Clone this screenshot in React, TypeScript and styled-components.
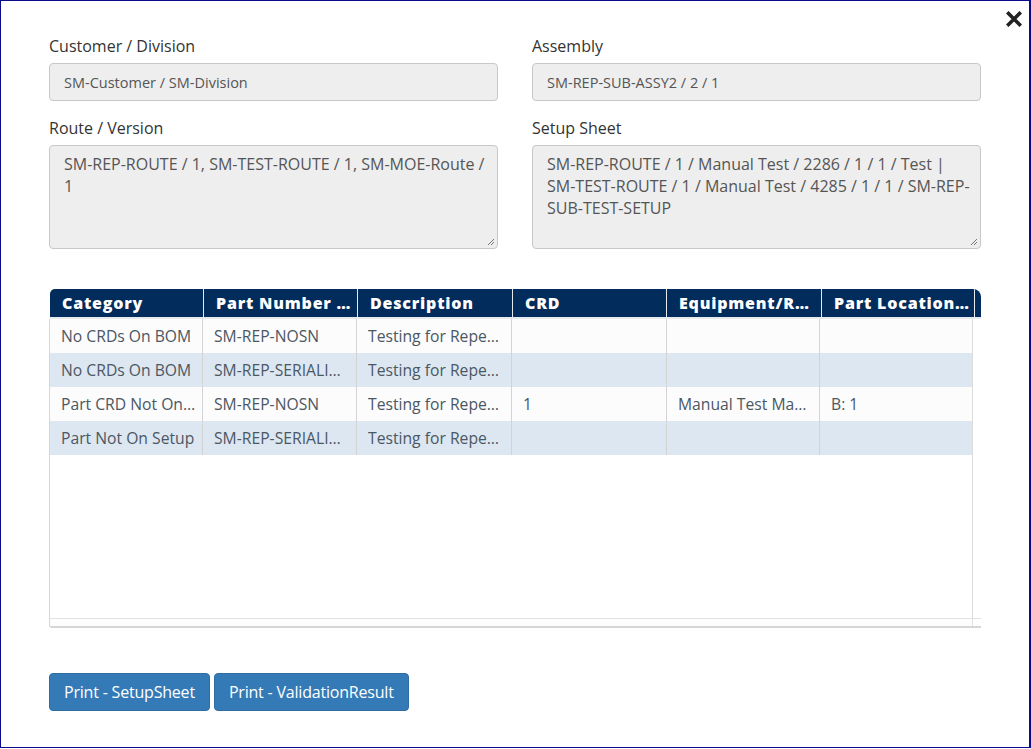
import React from "react";
import styled, { createGlobalStyle } from "styled-components";

const Global = createGlobalStyle`
  html, body { margin: 0; padding: 0; background: #fff; }
  body { font-family: "Open Sans", "Liberation Sans", sans-serif; }
  * { box-sizing: border-box; }
`;

const Frame = styled.div`
  position: relative;
  width: 1031px;
  height: 748px;
  border: 1px solid #0a0a8a;
  border-right-width: 2px;
  background: #fff;
  padding: 35px 49px 0 48px;
  display: flex;
  flex-direction: column;
`;

const Close = styled.button`
  position: absolute;
  top: 8px;
  right: 5px;
  width: 20px;
  height: 20px;
  border: none;
  background: none;
  padding: 0;
  cursor: pointer;
  display: flex;
  align-items: center;
  justify-content: center;
`;

const FormGrid = styled.div`
  display: grid;
  grid-template-columns: 449px 449px;
  column-gap: 34px;
  row-gap: 17px;
`;

const Field = styled.div`
  display: flex;
  flex-direction: column;
`;

const Label = styled.label`
  font-size: 16px;
  color: #333;
  line-height: 21px;
  margin-bottom: 6px;
`;

const Input = styled.div`
  height: 38px;
  background: #eeeeee;
  border: 1px solid #c8c8c8;
  border-radius: 4px;
  padding: 0 14px;
  font-size: 14.5px;
  color: #555;
  display: flex;
  align-items: center;
`;

const TextArea = styled.div`
  position: relative;
  height: 104px;
  background: #eeeeee;
  border: 1px solid #c8c8c8;
  border-radius: 4px;
  padding: 7px 10px 7px 14px;
  font-size: 16px;
  line-height: 22px;
  color: #555;
`;

const Grip = styled.svg`
  position: absolute;
  right: 2px;
  bottom: 2px;
`;

const GridWrap = styled.div`
  margin-top: 40px;
  width: 932px;
  display: flex;
  flex-direction: column;
`;

const Header = styled.div`
  display: grid;
  grid-template-columns: 154px 154px 155px 154px 155px 153px 7px;
  height: 30px;
  background: #022c5c;
  border-radius: 5px 8px 0 0;
  margin-left: 1px;
  width: 931px;
  overflow: hidden;
`;

const HeadCell = styled.div<{ $last?: boolean }>`
  color: #fff;
  font-weight: 800;
  font-size: 16px;
  letter-spacing: 0.8px;
  padding: 0 5px 0 12px;
  display: flex;
  align-items: center;
  white-space: nowrap;
  overflow: hidden;
  border-right: ${(p) => (p.$last ? "none" : "1px solid #e6e9ee")};
  border-bottom: 2px solid #e6e9ee;
`;

const HeadText = styled.span`
  overflow: hidden;
  text-overflow: ellipsis;
`;

const Body = styled.div`
  height: 309px;
  border-left: 1px solid #d6d6d6;
  border-bottom: 2px solid #d6d6d6;
  width: 932px;
  display: flex;
  flex-direction: column;
  border-bottom-left-radius: 3px;
`;

const Viewport = styled.div`
  flex: 1;
  display: flex;
`;

const Rows = styled.div`
  width: 923px;
  border-right: 1px solid #dcdcdc;
  display: flex;
  flex-direction: column;
`;

const VScroll = styled.div`
  flex: 1;
  background: #fff;
`;

const HScroll = styled.div`
  height: 8px;
  display: flex;
  border-top: 1px solid #e2e2e2;
`;

const HTrack = styled.div`
  width: 923px;
  border-right: 1px solid #e2e2e2;
  background: #fdfdfd;
`;

const Row = styled.div<{ $alt: boolean }>`
  display: grid;
  grid-template-columns: 153px 154px 155px 155px 153px 153px;
  height: 34px;
  background: ${(p) => (p.$alt ? "#dde7f1" : "#fcfcfc")};
`;

const Cell = styled.div<{ $last?: boolean; $padRight: number }>`
  font-size: 15.7px;
  color: #4b5763;
  padding: 0 ${(p) => p.$padRight}px 0 11px;
  display: flex;
  align-items: center;
  white-space: nowrap;
  overflow: hidden;
  border-right: ${(p) => (p.$last ? "none" : "1px solid #d3d3d3")};
`;

const CellText = styled.span`
  overflow: hidden;
  text-overflow: ellipsis;
`;

const Buttons = styled.div`
  margin-top: 45px;
  display: flex;
  gap: 4px;
`;

const Button = styled.button`
  height: 38px;
  padding: 0 14px;
  background: #337ab7;
  border: 1px solid #2e6da4;
  border-radius: 4px;
  color: #fff;
  font-family: "Open Sans", "Liberation Sans", sans-serif;
  font-size: 16px;
  letter-spacing: -0.2px;
  cursor: pointer;
`;

const headers = [
  "Category",
  "Part Number Description",
  "Description",
  "CRD",
  "Equipment/Resource",
  "Part Location Name",
];

const colPadRight = [5, 9, 8, 8, 8, 8];

const rows = [
  ["No CRDs On BOM", "SM-REP-NOSN", "Testing for Repeat Serial", "", "", ""],
  ["No CRDs On BOM", "SM-REP-SERIALIZED", "Testing for Repeat Serial", "", "", ""],
  ["Part CRD Not On Setup", "SM-REP-NOSN", "Testing for Repeat Serial", "1", "Manual Test Machine", "B: 1"],
  ["Part Not On Setup", "SM-REP-SERIALIZED", "Testing for Repeat Serial", "", "", ""],
];

export default function App() {
  return (
    <>
      <Global />
      <Frame>
        <Close aria-label="Close">
          <svg width="16" height="16" viewBox="0 0 16 16">
            <path d="M2.5 2.5 L13.5 13.5 M13.5 2.5 L2.5 13.5" stroke="#222" strokeWidth="3.6" strokeLinecap="square" />
          </svg>
        </Close>
        <FormGrid>
          <Field>
            <Label>Customer / Division</Label>
            <Input>SM-Customer / SM-Division</Input>
          </Field>
          <Field>
            <Label>Assembly</Label>
            <Input>SM-REP-SUB-ASSY2 / 2 / 1</Input>
          </Field>
          <Field>
            <Label>Route / Version</Label>
            <TextArea>
              SM-REP-ROUTE / 1, SM-TEST-ROUTE / 1, SM-MOE-Route / 1
              <Grip width="9" height="9" viewBox="0 0 9 9">
                <path d="M8 2 L2 8 M8 5 L5 8" stroke="#777" strokeWidth="1" />
              </Grip>
            </TextArea>
          </Field>
          <Field>
            <Label>Setup Sheet</Label>
            <TextArea>
              SM-REP-ROUTE / 1 / Manual Test / 2286 / 1 / 1 / Test | SM-TEST-ROUTE / 1 / Manual Test / 4285 / 1 / 1 / SM-REP-SUB-TEST-SETUP
              <Grip width="9" height="9" viewBox="0 0 9 9">
                <path d="M8 2 L2 8 M8 5 L5 8" stroke="#777" strokeWidth="1" />
              </Grip>
            </TextArea>
          </Field>
        </FormGrid>

        <GridWrap>
          <Header>
            {headers.map((h, i) => (
              <HeadCell key={i}>
                <HeadText>{h}</HeadText>
              </HeadCell>
            ))}
            <HeadCell $last />
          </Header>
          <Body>
            <Viewport>
              <Rows>
                {rows.map((r, i) => (
                  <Row key={i} $alt={i % 2 === 1}>
                    {r.map((c, j) => (
                      <Cell key={j} $last={j === r.length - 1} $padRight={colPadRight[j]}>
                        <CellText>{c}</CellText>
                      </Cell>
                    ))}
                  </Row>
                ))}
              </Rows>
              <VScroll />
            </Viewport>
            <HScroll>
              <HTrack />
            </HScroll>
          </Body>
        </GridWrap>

        <Buttons>
          <Button>Print - SetupSheet</Button>
          <Button>Print - ValidationResult</Button>
        </Buttons>
      </Frame>
    </>
  );
}
